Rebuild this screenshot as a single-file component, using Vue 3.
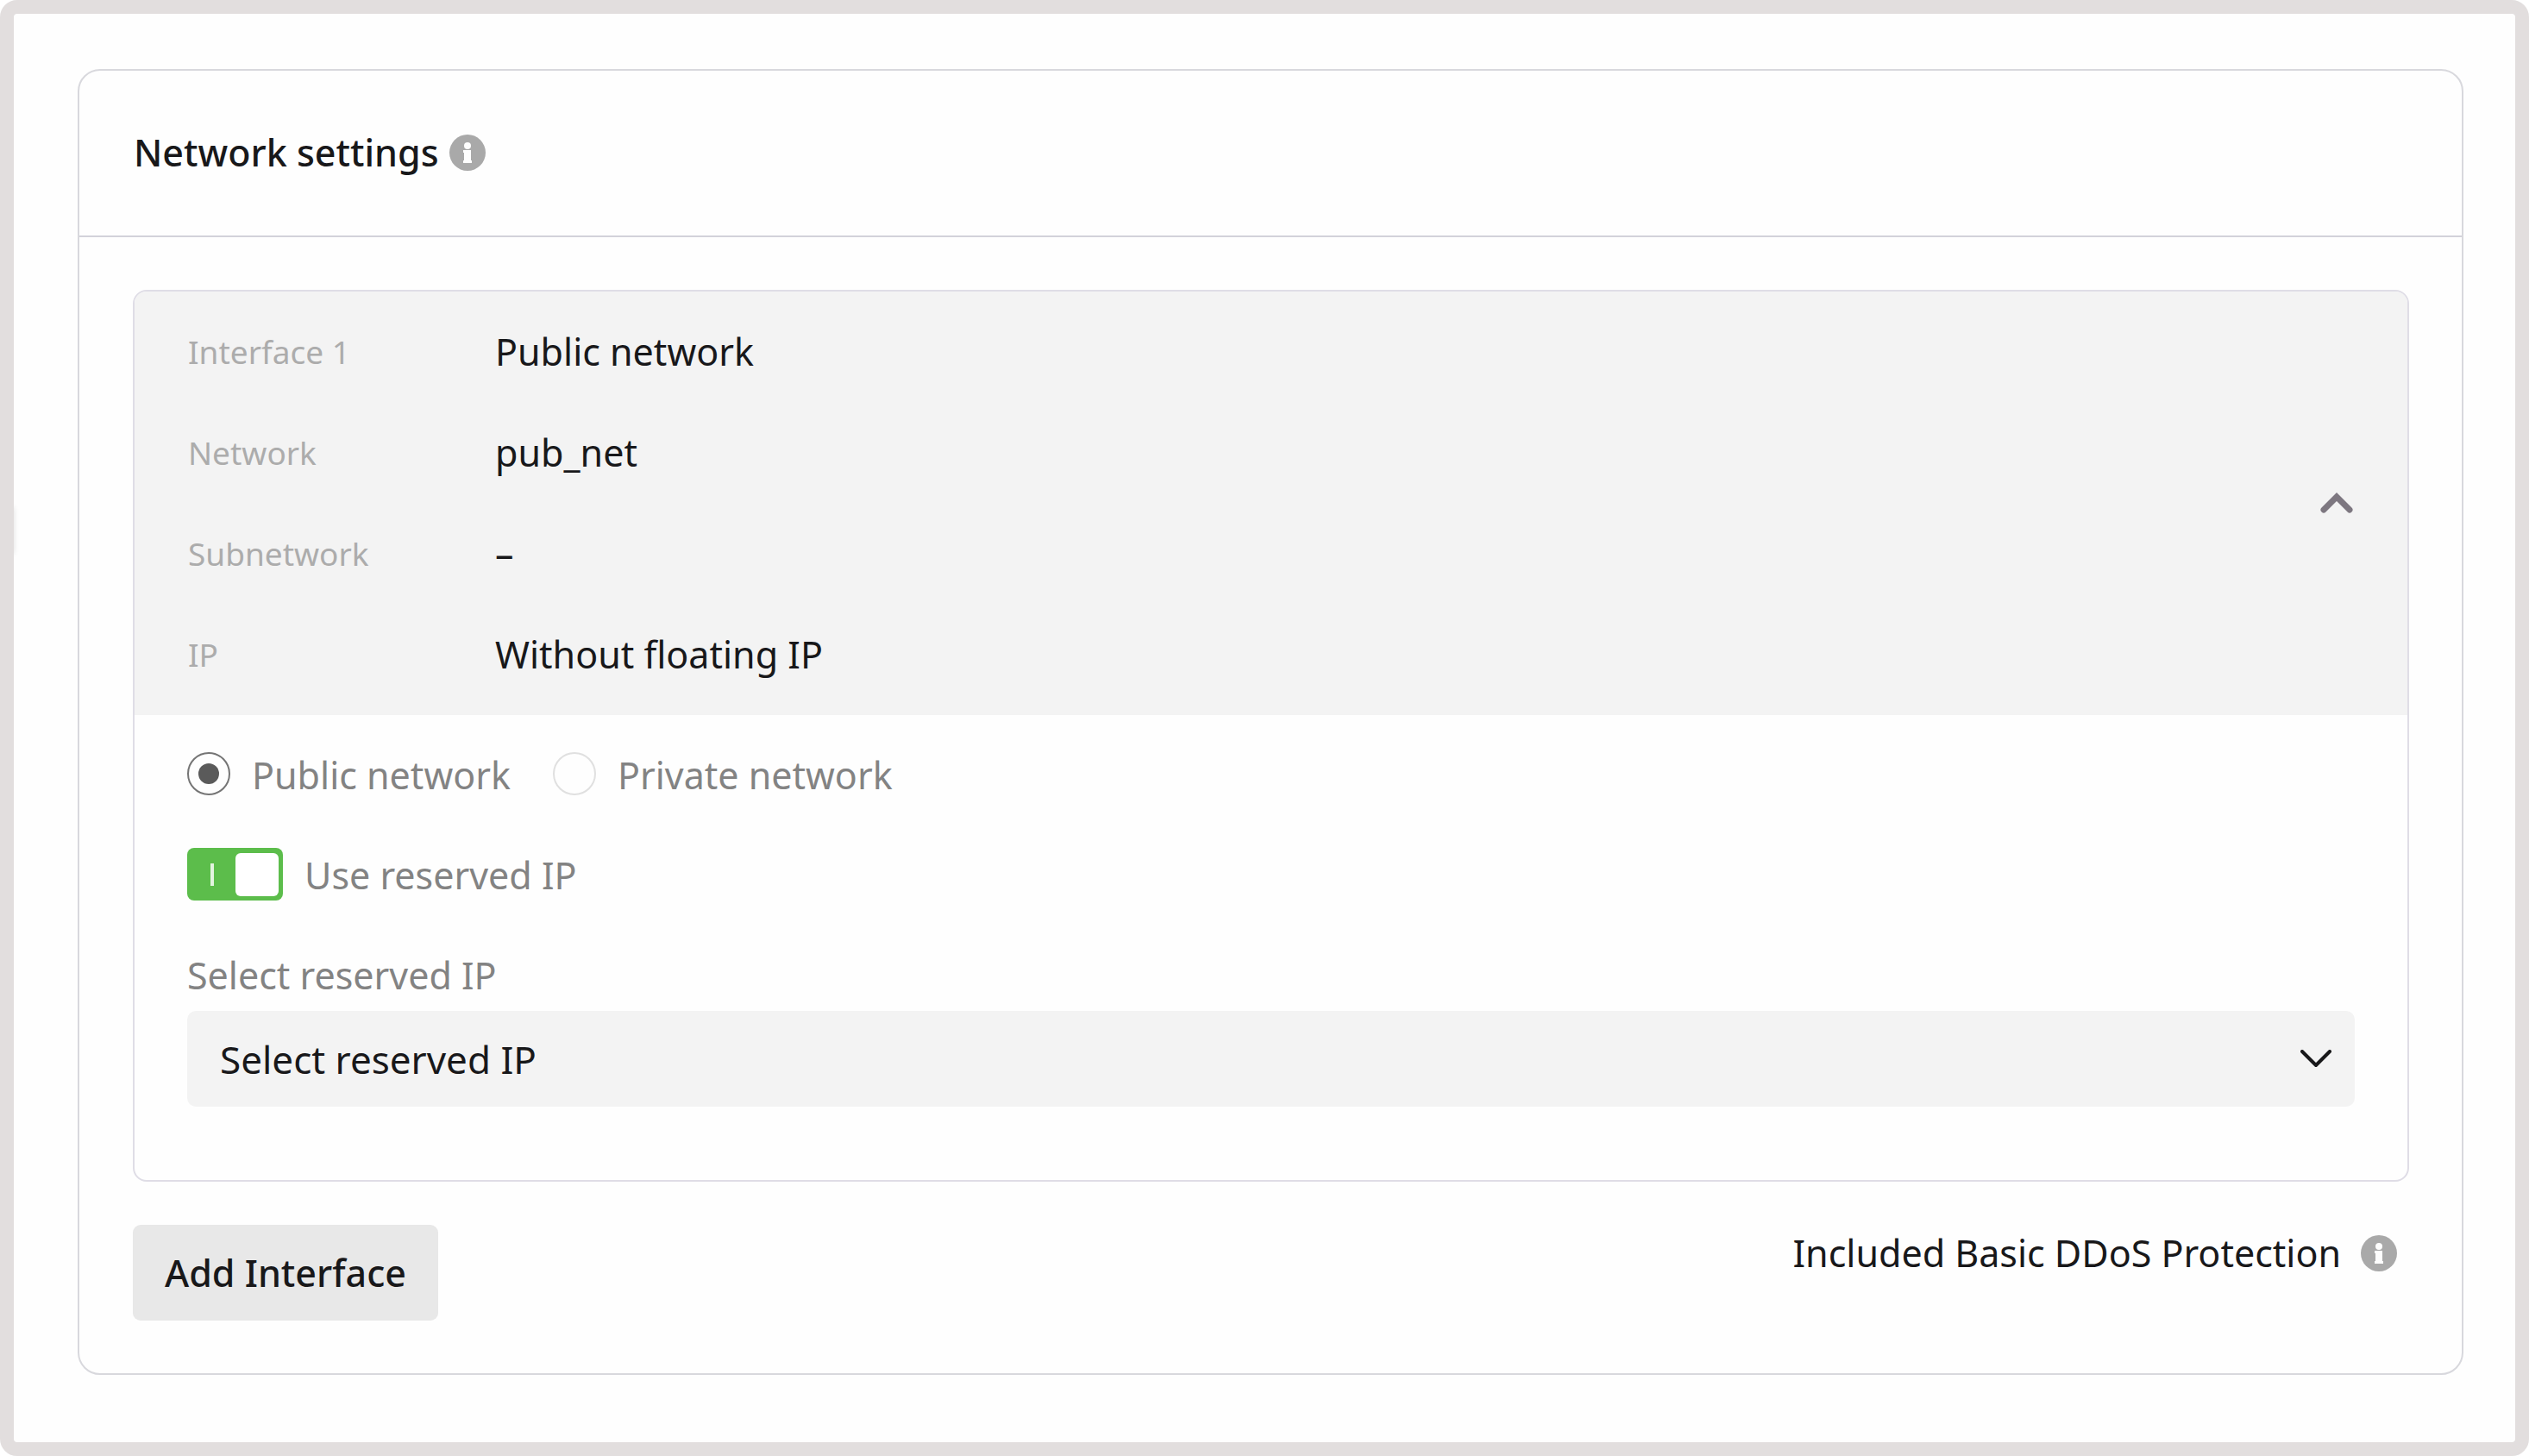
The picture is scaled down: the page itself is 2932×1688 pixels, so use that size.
<script setup>
import { ref } from 'vue'

const rows = [
  { label: 'Interface 1', value: 'Public network' },
  { label: 'Network', value: 'pub_net' },
  { label: 'Subnetwork', value: '–' },
  { label: 'IP', value: 'Without floating IP' },
]

const networkType = ref('public')
const useReserved = ref(true)
const reservedIp = ref('')
</script>

<template>
  <main class="frame">
    <section class="card">
      <header class="card-header">
        <h1 class="title">Network settings</h1>
        <svg class="info" viewBox="0 0 42 42" aria-hidden="true">
          <circle cx="21" cy="21" r="21" />
          <circle class="mark" cx="21" cy="13" r="4" />
          <path class="mark" d="M16 18h9v12h1v3H16v-3h1v-9h-1z" />
        </svg>
      </header>

      <div class="card-body">
        <div class="interface">
          <div class="summary">
            <dl class="rows">
              <div v-for="row in rows" :key="row.label" class="row">
                <dt>{{ row.label }}</dt>
                <dd>{{ row.value }}</dd>
              </div>
            </dl>
            <button class="collapse" type="button" aria-label="Collapse interface">
              <svg viewBox="0 0 40 26" aria-hidden="true">
                <path d="M5 21L20 6l15 15" />
              </svg>
            </button>
          </div>

          <form class="settings">
            <div class="options">
              <label class="option">
                <input v-model="networkType" class="radio" type="radio" name="network" value="public" />
                <span>Public network</span>
              </label>
              <label class="option">
                <input v-model="networkType" class="radio" type="radio" name="network" value="private" />
                <span>Private network</span>
              </label>
            </div>

            <label class="toggle-row">
              <input v-model="useReserved" class="toggle" type="checkbox" />
              <span>Use reserved IP</span>
            </label>

            <div class="field">
              <label for="reserved-ip">Select reserved IP</label>
              <div class="select-box">
                <select id="reserved-ip" v-model="reservedIp">
                  <option value="">Select reserved IP</option>
                </select>
                <svg class="arrow" viewBox="0 0 36 22" aria-hidden="true">
                  <path d="M2 2l16 16L34 2" />
                </svg>
              </div>
            </div>
          </form>
        </div>

        <footer class="card-footer">
          <button class="add" type="button">Add Interface</button>
          <p class="ddos">
            <span>Included Basic DDoS Protection</span>
            <svg class="info" viewBox="0 0 42 42" aria-hidden="true">
              <circle cx="21" cy="21" r="21" />
              <circle class="mark" cx="21" cy="13" r="4" />
              <path class="mark" d="M16 18h9v12h1v3H16v-3h1v-9h-1z" />
            </svg>
          </p>
        </footer>
      </div>
    </section>
  </main>
</template>

<style>
body {
  background: #fff;
}
</style>

<style scoped>
.frame {
  position: relative;
  box-sizing: border-box;
  min-height: 100vh;
  padding: 64px 60px 64px 74px;
  border: 16px solid #e2dede;
  border-radius: 20px;
  overflow: hidden;
  background: #fefefe;
  color: #18181a;
  font-family: "Noto Sans", sans-serif;
  font-size: 43px;
  line-height: 54px;
}

/* soft edge of the drawer handle tucked behind the frame */
.frame::before {
  content: "";
  position: absolute;
  top: 572px;
  left: -8px;
  width: 8px;
  height: 54px;
  box-shadow: 0 0 6px rgba(0, 0, 0, 0.12);
}

.card {
  border: 2px solid #d8d8dd;
  border-radius: 26px;
}

.card-header {
  display: flex;
  align-items: center;
  gap: 12px;
  height: 189px;
  padding: 0 63px 2px;
  border-bottom: 2px solid #d3d2da;
}

.title {
  margin: 0;
  font-size: 43px;
  font-weight: 500;
}

.info {
  flex: none;
  width: 42px;
  height: 42px;
  fill: #a9a9a9;
}

.mark {
  fill: #fefefe;
}

.card-body {
  padding: 61px 61px 61px 62px;
}

.interface {
  border: 2px solid #dfdde6;
  border-radius: 16px;
  overflow: hidden;
}

.summary {
  display: flex;
  align-items: center;
  justify-content: space-between;
  padding: 11px 62px 12px;
  background: #f3f3f3;
}

.rows {
  margin: 0;
}

.row {
  display: flex;
  align-items: center;
  line-height: 117px;
}

.row dt {
  width: 356px;
  color: #acacac;
  font-size: 37px;
}

.row dd {
  margin: 0;
}

.collapse {
  display: flex;
  padding: 0;
  border: 0;
  background: none;
}

.collapse svg {
  width: 40px;
  height: 26px;
  fill: none;
  stroke: #7d7780;
  stroke-width: 7;
  stroke-linecap: round;
}

.settings {
  display: flex;
  flex-direction: column;
  gap: 57px;
  padding: 43px 61px 85px;
  color: #838383;
}

.options {
  display: flex;
  gap: 49px;
}

.option,
.toggle-row {
  display: flex;
  align-items: flex-start;
  gap: 25px;
}

.toggle-row {
  line-height: 64px;
}

.radio {
  appearance: none;
  flex: none;
  display: grid;
  place-content: center;
  box-sizing: border-box;
  width: 50px;
  height: 50px;
  margin: 0;
  border: 2px solid #e0e0e0;
  border-radius: 50%;
}

.radio:checked {
  border-color: #757575;
}

.radio:checked::before {
  content: "";
  width: 24px;
  height: 24px;
  border-radius: 50%;
  background: #5a5a5a;
}

.toggle {
  appearance: none;
  flex: none;
  display: flex;
  align-items: center;
  justify-content: space-between;
  box-sizing: border-box;
  width: 111px;
  height: 61px;
  margin: 0;
  padding: 0 5px 0 27px;
  border-radius: 8px;
  background: #5cbd4b;
}

.toggle::before {
  content: "";
  width: 4px;
  height: 26px;
  background: #e3f4e0;
}

.toggle::after {
  content: "";
  width: 50px;
  height: 50px;
  border-radius: 6px;
  background: #fff;
}

.field {
  display: flex;
  flex-direction: column;
  gap: 14px;
}

.select-box {
  display: grid;
  align-items: center;
}

.select-box > * {
  grid-area: 1 / 1;
}

.select-box select {
  appearance: none;
  width: 100%;
  height: 111px;
  padding: 0 90px 0 38px;
  border: 0;
  border-radius: 10px;
  background: #f3f3f3;
  color: #18181a;
  font: inherit;
  font-size: 44px;
}

.arrow {
  justify-self: end;
  width: 36px;
  height: 22px;
  margin-right: 27px;
  fill: none;
  stroke: #18181a;
  stroke-width: 4;
  stroke-linecap: round;
  stroke-linejoin: round;
  pointer-events: none;
}

.card-footer {
  display: flex;
  align-items: flex-start;
  justify-content: space-between;
  margin-top: 50px;
}

.add {
  height: 111px;
  padding: 0 37px;
  border: 0;
  border-radius: 9px;
  background: #e8e8e8;
  color: #18181a;
  font: inherit;
  font-weight: 500;
}

.ddos {
  display: flex;
  align-items: center;
  gap: 23px;
  margin: 0;
  padding-right: 14px;
  line-height: 66px;
}
</style>
